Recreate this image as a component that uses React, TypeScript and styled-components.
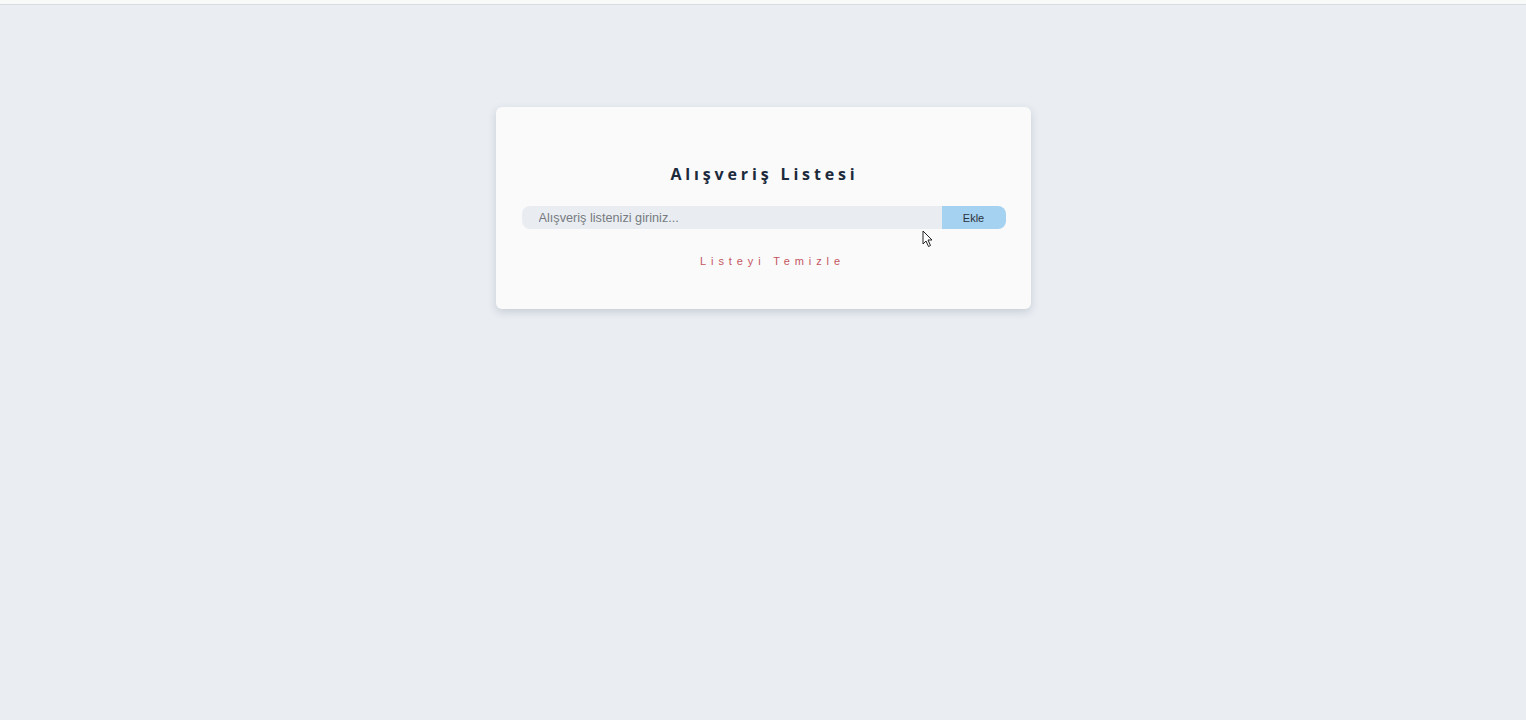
import React, { useState } from "react";
import styled, { createGlobalStyle } from "styled-components";

const GlobalStyle = createGlobalStyle`
  html, body { margin: 0; padding: 0; }
  body {
    background: #eaeef3;
    font-family: "Liberation Sans", Arial, sans-serif;
    min-height: 720px;
  }
`;

const Page = styled.div`
  position: relative;
  min-height: 720px;
  display: flex;
  flex-direction: column;
  align-items: center;
`;

const TopStrip = styled.div`
  align-self: stretch;
  height: 4px;
  background: #f8f9f9;
  border-bottom: 1px solid #d9dcdf;
`;

const Card = styled.div`
  margin-top: 102px;
  width: 535px;
  box-sizing: border-box;
  padding: 57px 25px 41px 26px;
  background: #fafafa;
  border-radius: 6px;
  box-shadow: 0 3px 8px rgba(40, 55, 80, 0.18);
  display: flex;
  flex-direction: column;
  align-items: center;
`;

const Title = styled.h1`
  margin: 0;
  padding-left: 2px;
  font-family: "Open Sans", sans-serif;
  font-size: 16px;
  line-height: 20px;
  font-weight: 700;
  letter-spacing: 3.85px;
  color: #1c2a3c;
`;

const Form = styled.form`
  margin-top: 22px;
  align-self: stretch;
  display: flex;
  height: 23px;
`;

const Input = styled.input`
  flex: 1;
  min-width: 0;
  border: none;
  outline: none;
  background: #e9edf2;
  border-radius: 8px 0 0 8px;
  padding: 0 0 0 17px;
  font-family: "Liberation Sans", Arial, sans-serif;
  font-size: 12.7px;
  color: #333;
  &::placeholder { color: #777b80; }
`;

const AddButton = styled.button`
  width: 64px;
  border: none;
  background: #a5d2f0;
  border-radius: 0 8px 8px 0;
  font-family: "Liberation Sans", Arial, sans-serif;
  font-size: 11px;
  color: #2b333d;
  padding: 0;
  cursor: pointer;
`;

const ClearButton = styled.button`
  margin: 25px 0 0 13px;
  border: none;
  background: none;
  padding: 0 0 0 5px;
  font-family: "Liberation Sans", Arial, sans-serif;
  font-size: 11px;
  line-height: 14px;
  letter-spacing: 4.9px;
  color: #c4555e;
  cursor: pointer;
`;

const Cursor = styled.svg`
  position: absolute;
  left: 922px;
  top: 230px;
  pointer-events: none;
`;

export default function App() {
  const [value, setValue] = useState("");
  return (
    <>
      <GlobalStyle />
      <Page>
        <TopStrip />
        <Card>
          <Title>Alışveriş Listesi</Title>
          <Form onSubmit={(e) => e.preventDefault()}>
            <Input
              placeholder="Alışveriş listenizi giriniz..."
              value={value}
              onChange={(e) => setValue(e.target.value)}
            />
            <AddButton type="submit">Ekle</AddButton>
          </Form>
          <ClearButton type="button">Listeyi Temizle</ClearButton>
        </Card>
        <Cursor width="12" height="18" viewBox="0 0 12 18">
          <path
            d="M1 1 L1 14 L4 11 L6.5 16.5 L8.5 15.5 L6 10 L10 10 Z"
            fill="#fff"
            stroke="#222"
            strokeWidth="1"
            strokeLinejoin="round"
          />
        </Cursor>
      </Page>
    </>
  );
}
